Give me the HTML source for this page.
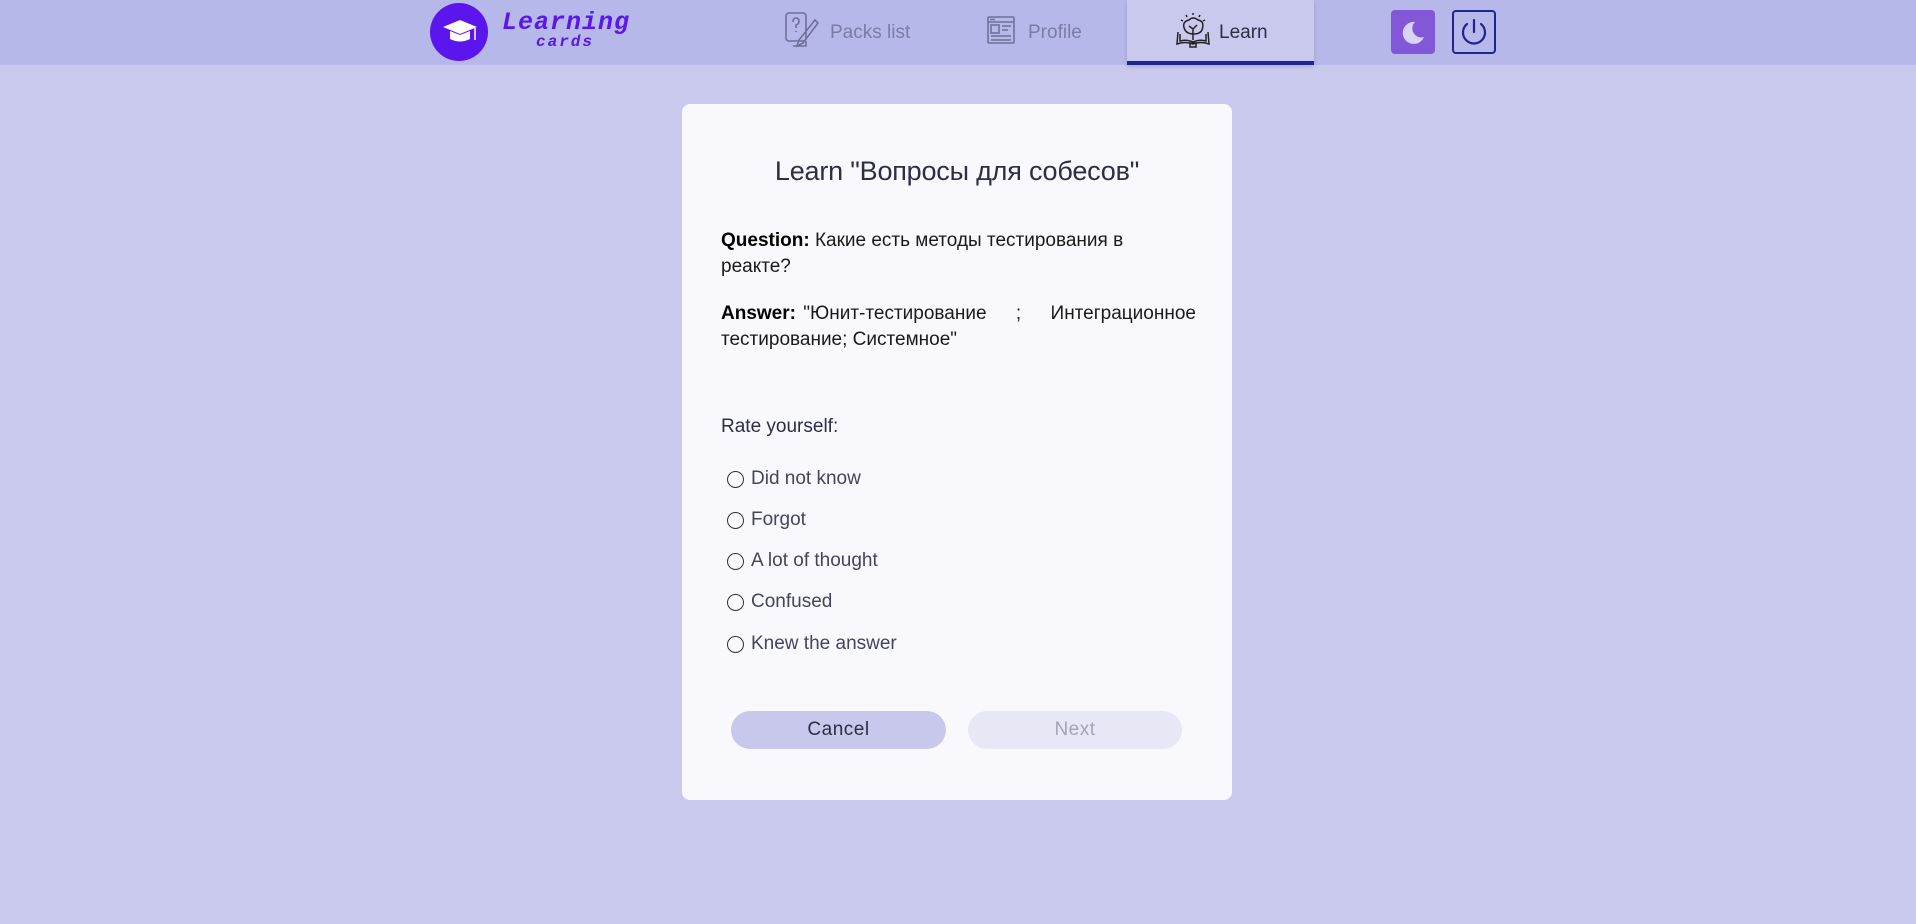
<!DOCTYPE html>
<html><head><meta charset="utf-8">
<style>
*{margin:0;padding:0;box-sizing:border-box}
body{width:1916px;height:924px;background:#c9c9ee;font-family:"Liberation Sans",sans-serif;position:relative;overflow:hidden;color:#2d2d44}
.hdr{position:absolute;left:0;top:0;width:1916px;height:65px;background:#b7b8ea}
.abs{position:absolute}
.logo{left:430px;top:3px;width:58px;height:58px;border-radius:50%;background:#5a16ec}
.lt{left:502px;top:8px;font-family:"Liberation Mono",monospace;font-style:italic;font-weight:bold;color:#5a16ec;font-size:25px;letter-spacing:1px}
.lc{left:536px;top:33px;font-family:"Liberation Mono",monospace;font-style:italic;color:#5a16ec;font-size:16px;letter-spacing:2px;font-weight:bold}
.nav{font-size:19px;color:#7b7ca6;top:22px}
.tab{left:1127px;top:0;width:187px;height:65px;background:#c9c9ee;border-bottom:4px solid #1e2593;box-shadow:0 2px 4px rgba(0,0,0,.15)}
.moon{left:1391px;top:10px;width:44px;height:44px;border-radius:4px;background:#8358d8}
.pow{left:1452px;top:10px;width:44px;height:44px;border-radius:4px;border:2px solid #1e2593}
.card{left:682px;top:104px;width:550px;height:696px;background:#f9f9fd;border-radius:8px}
h1{position:absolute;left:0;width:550px;top:52px;text-align:center;font-size:27px;font-weight:normal;color:#2d2d44;letter-spacing:-.2px}
.p{position:absolute;left:39px;width:475px;font-size:19px;line-height:26px;color:#1a1a1a}
.p b{color:#000}
.rate{position:absolute;left:39px;top:312px;font-size:19px;color:#2d2d44}
.r{position:absolute;left:45px;font-size:19px;color:#44445a}
.r i{position:absolute;left:0;top:3px;width:17px;height:17px;border:1.5px solid #333;border-radius:50%}
.r span{position:absolute;left:24px;top:0;white-space:nowrap}
.btn{position:absolute;top:607px;height:38px;border-radius:19px;text-align:center;line-height:38px;font-size:19px;letter-spacing:.5px}
</style></head><body>
<div class="hdr"></div>
<div class="abs logo"><svg width="58" height="58" viewBox="0 0 58 58"><path d="M13 24 L30 17 L47 24 L30 31 Z" fill="#fff"/><path d="M20 28 V36 Q30 41 40 36 V28 L30 32 Z" fill="#fff"/><path d="M45 25 V37" stroke="#fff" stroke-width="1.5"/></svg></div>
<div class="abs lt">Learning</div>
<div class="abs lc">cards</div>
<svg class="abs" style="left:785px;top:12px" width="34" height="36" viewBox="0 0 34 36" fill="none" stroke="#6f7099" stroke-width="1.6"><rect x="1" y="1" width="20" height="28" rx="3"/><path d="M8 10 Q8 6 11 6 Q14 6 14 9 Q14 12 11 13 V16 M11 19 V20"/><path d="M30 8 L14 28 L12 34 L18 31 L33 11 Z"/><path d="M21 29 V34 H8"/></svg>
<div class="abs nav" style="left:830px">Packs list</div>
<svg class="abs" style="left:987px;top:16px" width="28" height="28" viewBox="0 0 28 28" fill="none" stroke="#6f7099" stroke-width="1.6"><rect x="1" y="1" width="26" height="26" rx="1"/><path d="M1 6 H27 M3 3.5 H8"/><rect x="4" y="9" width="8" height="8"/><path d="M15 10 H24 M15 14 H21 M4 20 H24 M4 24 H24"/></svg>
<div class="abs nav" style="left:1028px">Profile</div>
<div class="abs tab"></div>
<svg class="abs" style="left:1175px;top:12px" width="36" height="36" viewBox="0 0 36 36" fill="none" stroke="#222" stroke-width="1.5"><path d="M10 18 Q6 10 14 8 Q18 4 23 8 Q30 9 27 18 Q25 22 19 22 Q12 22 10 18Z"/><path d="M14 14 L18 17 L22 13 M18 17 V28"/><path d="M3 20 L2 32 Q10 29 18 32 Q26 29 34 32 L33 20"/><path d="M5 22 V29 Q11 27 18 30 Q25 27 31 29 V22"/><rect x="15" y="31" width="6" height="4"/><path d="M18 1 V3 M11 3 L12 5 M25 3 L24 5 M6 8 L8 9 M30 8 L28 9"/></svg>
<div class="abs nav" style="left:1219px;color:#2d2d44">Learn</div>
<div class="abs moon"><svg width="44" height="44" viewBox="0 0 44 44"><path d="M24 12 A11 11 0 1 0 33 27 A9 9 0 0 1 24 12Z" fill="#d9d4f5"/></svg></div>
<div class="abs pow"><svg width="40" height="40" viewBox="0 0 40 40" fill="none" stroke="#1e2593" stroke-width="2.2" stroke-linecap="round"><path d="M20 8 V20"/><path d="M13 12 A11 11 0 1 0 27 12"/></svg></div>
<div class="abs card">
<h1>Learn "Вопросы для собесов"</h1>
<div class="p" style="top:124px"><b>Question:</b> Какие есть методы тестирования в<br>реакте?</div>
<div class="p" style="top:197px;text-align:justify"><b>Answer:</b> "Юнит-тестирование &nbsp;&nbsp; ; &nbsp;&nbsp; Интеграционное тестирование; Системное"</div>
<div class="rate">Rate yourself:</div>
<div class="r" style="top:364px"><i></i><span>Did not know</span></div>
<div class="r" style="top:405px"><i></i><span>Forgot</span></div>
<div class="r" style="top:446px"><i></i><span>A lot of thought</span></div>
<div class="r" style="top:487px"><i></i><span>Confused</span></div>
<div class="r" style="top:529px"><i></i><span>Knew the answer</span></div>
<div class="btn" style="left:49px;width:215px;background:#c8c8ec;color:#2d2d44">Cancel</div>
<div class="btn" style="left:286px;width:214px;background:#e7e7f5;color:#a3a3bb">Next</div>
</div>
</body></html>
